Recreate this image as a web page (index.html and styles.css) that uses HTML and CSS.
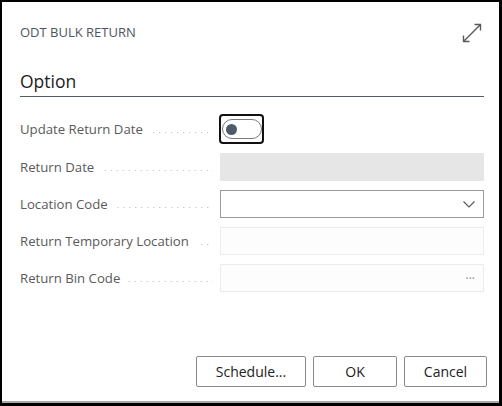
FILE: index.html
```html
<!DOCTYPE html>
<html>
<head>
<meta charset="utf-8">
<link rel="stylesheet" href="styles.css">
</head>
<body>
<div class="dialog">
  <div class="header">
    <div class="title">ODT BULK RETURN</div>
    <svg class="expand" width="20" height="20" viewBox="0 0 20 20">
      <path d="M12.5 1.5h6v6M18.5 1.5L1.5 18.5M1.5 12.5v6h6" fill="none" stroke="#5a5a5a" stroke-width="1.4"/>
    </svg>
  </div>
  <div class="section">Option</div>
  <div class="form">
    <div class="row">
      <div class="label"><span class="text">Update Return Date</span><span class="dots"></span></div>
      <div class="toggle-focus"><div class="toggle"><div class="knob"></div></div></div>
    </div>
    <div class="row">
      <div class="label"><span class="text">Return Date</span><span class="dots"></span></div>
      <div class="field field-disabled"></div>
    </div>
    <div class="row">
      <div class="label"><span class="text">Location Code</span><span class="dots"></span></div>
      <div class="field field-select">
        <svg width="12" height="7" viewBox="0 0 12 7"><path d="M0.5 0.5L6 6L11.5 0.5" fill="none" stroke="#555" stroke-width="1.1"/></svg>
      </div>
    </div>
    <div class="row">
      <div class="label"><span class="text">Return Temporary Location</span><span class="dots"></span></div>
      <div class="field field-readonly"></div>
    </div>
    <div class="row">
      <div class="label"><span class="text">Return Bin Code</span><span class="dots"></span></div>
      <div class="field field-readonly field-lookup"><span class="ellipsis">···</span></div>
    </div>
  </div>
  <div class="footer">
    <button class="btn btn-schedule">Schedule...</button>
    <button class="btn btn-ok">OK</button>
    <button class="btn btn-cancel">Cancel</button>
  </div>
</div>
</body>
</html>
```

FILE: styles.css
```css
html, body {
  margin: 0;
  padding: 0;
  background: #000;
  width: 502px;
  height: 406px;
  overflow: hidden;
}

body {
  font-family: "Open Sans", "Noto Sans", sans-serif;
}

.dialog {
  margin: 2px 3px 3px 2px;
  height: 399px;
  background: #fff;
  border-bottom: 2px solid #a9a9a9;
  display: flex;
  flex-direction: column;
  padding: 0 15px 0 18px;
}

.header {
  display: flex;
  justify-content: space-between;
  align-items: flex-start;
  padding-top: 21px;
  height: 44px;
  box-sizing: border-box;
}

.title {
  font-size: 13px;
  line-height: 18px;
  color: #4b5563;
  letter-spacing: 0;
}

.expand {
  margin-top: 0px;
  margin-right: 2px;
}

.section {
  font-size: 17.5px;
  line-height: 24px;
  color: #212121;
  padding-top: 23px;
  padding-bottom: 3px;
  border-bottom: 1px solid #505c6a;
}

.form {
  display: flex;
  flex-direction: column;
  gap: 9px;
  margin-top: 17px;
}

.row {
  display: flex;
  align-items: center;
}

.label {
  width: 200px;
  display: flex;
  align-items: center;
  font-size: 13.2px;
  color: #5a5a5a;
  padding-right: 7px;
  box-sizing: border-box;
}

.label .text {
  white-space: nowrap;
}

.dots {
  flex: 1;
  height: 1px;
  margin-left: 8px;
  margin-top: 7px;
  background-image: linear-gradient(to right, #b5b5b5 1px, transparent 1px);
  background-size: 6px 1px;
  background-repeat: repeat-x;
  background-position: right center;
}

.toggle-focus {
  width: 45px;
  height: 30px;
  box-sizing: border-box;
  border: 2px solid #111;
  border-radius: 4px;
  display: flex;
  align-items: center;
  justify-content: center;
  margin-left: -1px;
}

.toggle {
  width: 40px;
  height: 20px;
  box-sizing: border-box;
  border: 1px solid #7a7a7a;
  border-radius: 10px;
  display: flex;
  align-items: center;
  padding-left: 3px;
}

.knob {
  width: 11px;
  height: 11px;
  border-radius: 50%;
  background: #4f5b6c;
}

.field {
  flex: 1;
  height: 28px;
  box-sizing: border-box;
  display: flex;
  align-items: center;
  justify-content: flex-end;
  padding-right: 8px;
}

.field-disabled {
  background: #e6e6e6;
}

.field-select {
  border: 1px solid #9a9a9a;
}

.field-readonly {
  border: 1px solid #ececec;
  background: #fdfdfd;
}

.ellipsis {
  font-size: 12px;
  color: #8a8a8a;
  letter-spacing: 0;
}

.footer {
  display: flex;
  justify-content: flex-end;
  gap: 7px;
  margin-top: auto;
  margin-bottom: 14px;
  margin-right: -3px;
}

.btn {
  height: 31px;
  box-sizing: border-box;
  border: 1px solid #8a8a8a;
  border-radius: 2px;
  background: #fff;
  font-family: "Open Sans", "Noto Sans", sans-serif;
  font-size: 14px;
  color: #212121;
  padding: 0;
}

.btn-schedule { width: 110px; }
.btn-ok { width: 84px; }
.btn-cancel { width: 83px; }
```
